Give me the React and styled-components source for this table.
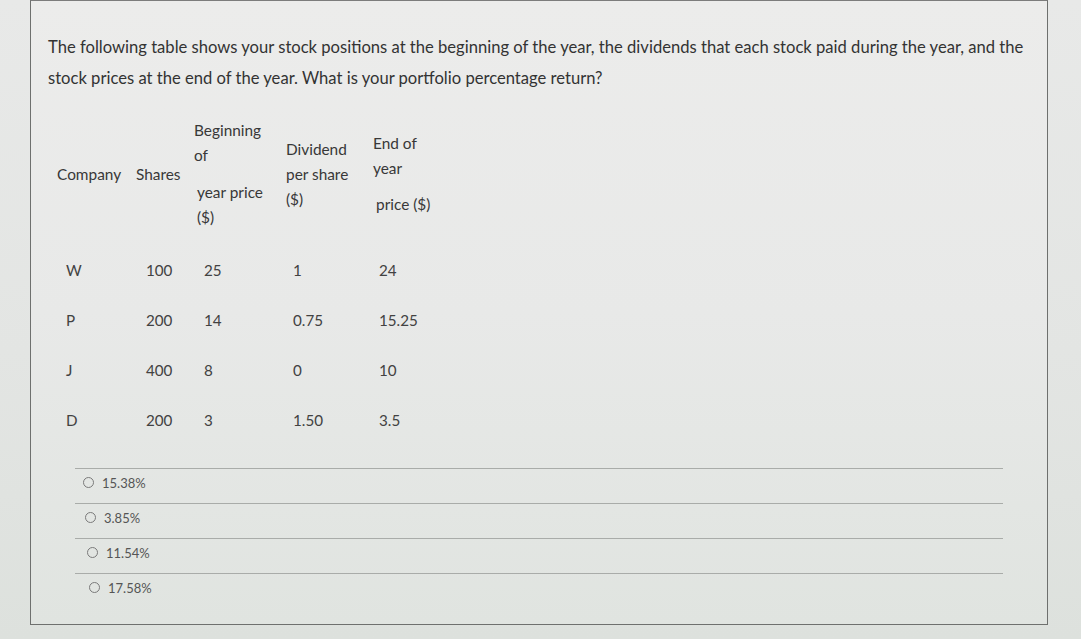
import React from "react";
import styled, { createGlobalStyle } from "styled-components";

const Global = createGlobalStyle`
  html, body { margin: 0; padding: 0; }
  body {
    background: linear-gradient(180deg, #e8e9e8 0%, #e3e5e3 55%, #dde1dd 100%);
    font-family: Lato, "Open Sans", "Liberation Sans", sans-serif;
    color: #3a3a3a;
  }
`;

const Page = styled.div`
  width: 1081px;
  height: 639px;
  overflow: hidden;
  padding-left: 30px;
  box-sizing: border-box;
`;

const Card = styled.section`
  width: 1018px;
  height: 625px;
  box-sizing: border-box;
  border: 1px solid #6e706e;
  border-top-color: #7c7c7c;
  background: linear-gradient(180deg, #ececeb 0%, #e8e9e8 50%, #e0e4e0 100%);
  padding: 31px 0 0 17px;
  display: flex;
  flex-direction: column;
`;

const Question = styled.p`
  margin: 0;
  font-size: 16.6px;
  line-height: 31px;
  color: #333;
  white-space: nowrap;
`;

const Table = styled.div`
  margin: 24px 0 0 9px;
  display: grid;
  grid-template-columns: 79px 58px 92px 87px 80px;
  grid-template-rows: 127px;
  grid-auto-rows: 50px;
`;

const HeadCell = styled.div`
  display: flex;
  flex-direction: column;
  justify-content: center;
  box-sizing: border-box;
  padding-bottom: 15px;
  font-size: 15.4px;
  line-height: 25px;
  color: #383838;
  white-space: nowrap;
`;

const HeadPara = styled.div`
  margin-top: ${(p) => p.$gap || 0}px;
  padding-left: ${(p) => p.$indent || 0}px;
`;

const DataCell = styled.div`
  display: flex;
  align-items: center;
  font-size: 15.2px;
  color: #424242;
  padding-left: ${(p) => p.$pad}px;
`;

const Options = styled.div`
  margin: 23px 0 0 27px;
  width: 928px;
  display: flex;
  flex-direction: column;
`;

const Option = styled.label`
  display: flex;
  align-items: center;
  gap: 8px;
  height: 35px;
  box-sizing: border-box;
  border-top: 1px solid #a9aca9;
  padding: 0 0 7px ${(p) => p.$pad}px;
  font-size: 13px;
  color: #555;
`;

const Radio = styled.span`
  width: 11px;
  height: 11px;
  box-sizing: border-box;
  border: 1.5px solid #7a7a7a;
  border-radius: 50%;
  flex: none;
`;

const rows = [
  ["W", "100", "25", "1", "24"],
  ["P", "200", "14", "0.75", "15.25"],
  ["J", "400", "8", "0", "10"],
  ["D", "200", "3", "1.50", "3.5"],
];

const pads = [9, 10, 10, 7, 6];

const answers = ["15.38%", "3.85%", "11.54%", "17.58%"];

export default function App() {
  return (
    <>
      <Global />
      <Page>
        <Card>
          <Question>
            The following table shows your stock positions at the beginning of the year, the dividends that each stock paid during the year, and the
            <br />
            stock prices at the end of the year. What is your portfolio percentage return?
          </Question>
          <Table>
            <HeadCell>Company</HeadCell>
            <HeadCell>Shares</HeadCell>
            <HeadCell>
              <HeadPara>
                Beginning
                <br />
                of
              </HeadPara>
              <HeadPara $gap={12} $indent={3}>
                year price
                <br />
                ($)
              </HeadPara>
            </HeadCell>
            <HeadCell>
              <HeadPara>
                Dividend
                <br />
                per share
                <br />
                ($)
              </HeadPara>
            </HeadCell>
            <HeadCell>
              <HeadPara>
                End of
                <br />
                year
              </HeadPara>
              <HeadPara $gap={11} $indent={3}>
                price ($)
              </HeadPara>
            </HeadCell>
            {rows.map((r, i) =>
              r.map((v, j) => (
                <DataCell key={`${i}-${j}`} $pad={pads[j]}>
                  {v}
                </DataCell>
              ))
            )}
          </Table>
          <Options>
            {answers.map((a, i) => (
              <Option key={a} $pad={8 + i * 2}>
                <Radio />
                {a}
              </Option>
            ))}
          </Options>
        </Card>
      </Page>
    </>
  );
}
